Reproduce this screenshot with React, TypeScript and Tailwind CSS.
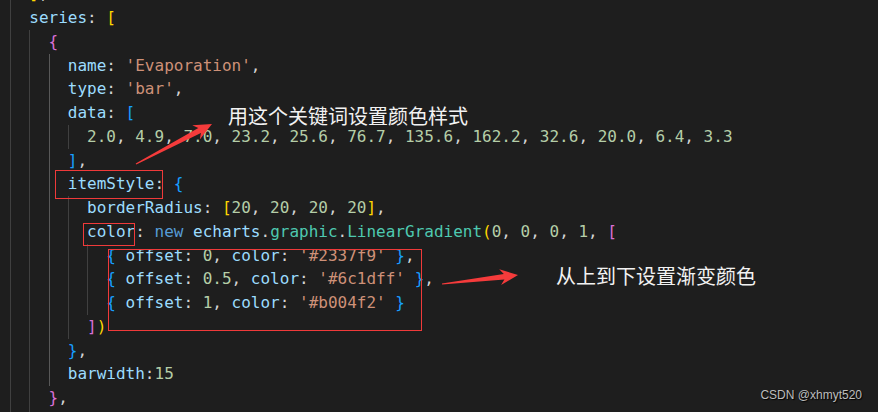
const K = 'text-[#9cdcfe]'
const S = 'text-[#ce9178]'
const N = 'text-[#b5cea8]'
const P = 'text-[#d4d4d4]'
const Y = 'text-[#ffd700]'
const PK = 'text-[#da70d6]'
const B = 'text-[#179fff]'
const KW = 'text-[#569cd6]'
const T = 'text-[#4ec9b0]'

type Token = [string, string]

interface CodeLine {
  indent: number
  tokens: Token[]
}

const nums = ['2.0', '4.9', '7.0', '23.2', '25.6', '76.7', '135.6', '162.2', '32.6', '20.0', '6.4', '3.3']

const numberTokens: Token[] = nums.flatMap((n, i) =>
  i < nums.length - 1 ? ([[n, N], [', ', P]] as Token[]) : ([[n, N]] as Token[])
)

const stop = (offset: string, color: string, last: boolean): Token[] => [
  ['{', B],
  [' offset', K],
  [': ', P],
  [offset, N],
  [', ', P],
  ['color', K],
  [': ', P],
  [`'${color}'`, S],
  [' ', P],
  ['}', B],
  ...(last ? [] : ([[',', P]] as Token[])),
]

const lines: CodeLine[] = [
  { indent: 1, tokens: [[']', Y], [',', P]] },
  { indent: 1, tokens: [['series', K], [': ', P], ['[', Y]] },
  { indent: 2, tokens: [['{', PK]] },
  { indent: 3, tokens: [['name', K], [': ', P], ["'Evaporation'", S], [',', P]] },
  { indent: 3, tokens: [['type', K], [': ', P], ["'bar'", S], [',', P]] },
  { indent: 3, tokens: [['data', K], [': ', P], ['[', B]] },
  { indent: 4, tokens: numberTokens },
  { indent: 3, tokens: [[']', B], [',', P]] },
  { indent: 3, tokens: [['itemStyle', K], [': ', P], ['{', B]] },
  {
    indent: 4,
    tokens: [
      ['borderRadius', K], [': ', P], ['[', Y],
      ['20', N], [', ', P], ['20', N], [', ', P], ['20', N], [', ', P], ['20', N],
      [']', Y], [',', P],
    ],
  },
  {
    indent: 4,
    tokens: [
      ['color', K], [': ', P], ['new', KW], [' ', P], ['echarts', K], ['.', P],
      ['graphic', T], ['.', P], ['LinearGradient', T], ['(', Y],
      ['0', N], [', ', P], ['0', N], [', ', P], ['0', N], [', ', P], ['1', N], [', ', P],
      ['[', PK],
    ],
  },
  { indent: 5, tokens: stop('0', '#2337f9', false) },
  { indent: 5, tokens: stop('0.5', '#6c1dff', false) },
  { indent: 5, tokens: stop('1', '#b004f2', true) },
  { indent: 4, tokens: [[']', PK], [')', Y]] },
  { indent: 3, tokens: [['}', B], [',', P]] },
  { indent: 3, tokens: [['barwidth', K], [':', P], ['15', N]] },
  { indent: 2, tokens: [['}', PK], [',', P]] },
  { indent: 2, tokens: [] },
]

// filled annotation arrow, thin tail widening toward a notched head
const arrowPoints = (x1: number, y1: number, x2: number, y2: number) => {
  const dx = x2 - x1
  const dy = y2 - y1
  const len = Math.hypot(dx, dy)
  const ux = dx / len
  const uy = dy / len
  const nx = -uy
  const ny = ux
  const headLen = 18
  const neck = 14
  const headW = 8
  const shaftW = 2.8
  const pts = [
    [x1 + nx * 0.6, y1 + ny * 0.6],
    [x2 - ux * neck + nx * shaftW, y2 - uy * neck + ny * shaftW],
    [x2 - ux * headLen + nx * headW, y2 - uy * headLen + ny * headW],
    [x2, y2],
    [x2 - ux * headLen - nx * headW, y2 - uy * headLen - ny * headW],
    [x2 - ux * neck - nx * shaftW, y2 - uy * neck - ny * shaftW],
    [x1 - nx * 0.6, y1 - ny * 0.6],
  ]
  return pts.map(([x, y]) => `${x.toFixed(1)},${y.toFixed(1)}`).join(' ')
}

const Line = ({ line }: { line: CodeLine }) => (
  <div className="flex h-[23.75px] whitespace-pre">
    {Array.from({ length: line.indent }).map((_, i) => (
      <span
        key={i}
        className={
          i === 2
            ? 'w-[2ch] shrink-0 border-l border-[#585858]'
            : 'w-[2ch] shrink-0 border-l border-[#404040]'
        }
      />
    ))}
    {line.tokens.map(([text, cls], i) => (
      <span key={i} className={cls}>
        {text}
      </span>
    ))}
  </div>
)

export default function App() {
  return (
    <div className="relative w-[878px] h-[412px] overflow-hidden bg-[#1e1e1e]">
      <div className="-mt-[17.6px] pl-[10px] font-['DejaVu_Sans_Mono',monospace] text-[16px] leading-[23.75px]">
        {lines.map((line, i) => (
          <Line key={i} line={line} />
        ))}
      </div>

      <div className="absolute left-[55px] top-[170px] w-[108px] h-[29px] border border-[#f03a3a]" />
      <div className="absolute left-[83px] top-[223px] w-[52px] h-[23px] border border-[#f03a3a]" />
      <div className="absolute left-[108px] top-[249px] w-[314px] h-[82px] border border-[#f03a3a]" />

      <svg className="absolute inset-0 pointer-events-none" width="878" height="412">
        <polygon points={arrowPoints(136, 164, 212, 124)} fill="#f53b3b" />
        <polygon points={arrowPoints(442, 284, 518, 275)} fill="#f53b3b" />
      </svg>

      <div className="absolute left-[228px] top-[106px] text-[20px] leading-[20px] text-[#f2f2f2] font-['Noto_Sans_CJK_SC',sans-serif]">
        用这个关键词设置颜色样式
      </div>
      <div className="absolute left-[556px] top-[266px] text-[20px] leading-[20px] text-[#f2f2f2] font-['Noto_Sans_CJK_SC',sans-serif]">
        从上到下设置渐变颜色
      </div>

      <div className="absolute right-[16px] top-[387px] text-[12px] leading-[16px] text-[#bdbdbd] font-['Liberation_Sans',sans-serif] [text-shadow:1px_1px_1px_#000]">
        CSDN @xhmyt520
      </div>
    </div>
  )
}
